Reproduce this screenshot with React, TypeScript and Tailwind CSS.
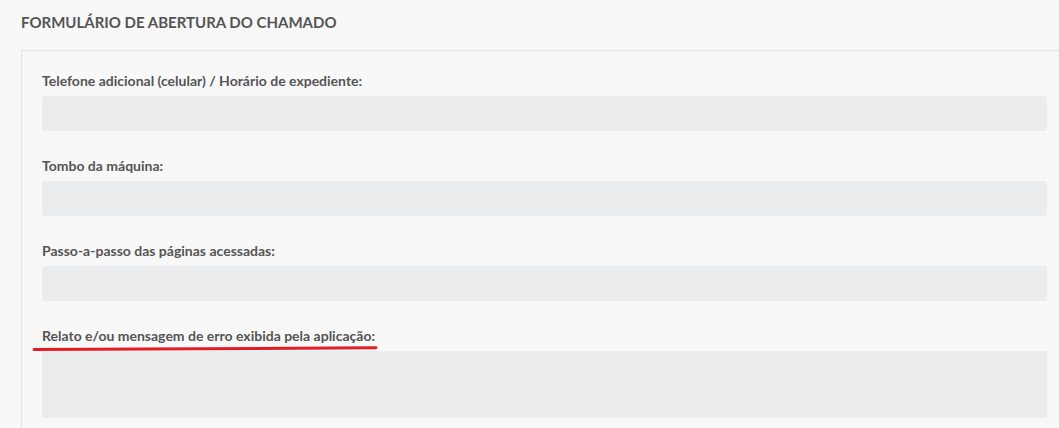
import React from "react";

const fields = [
  { label: "Telefone adicional (celular) / Horário de expediente:", h: "h-[35px]" },
  { label: "Tombo da máquina:", h: "h-[35px]" },
  { label: "Passo-a-passo das páginas acessadas:", h: "h-[35px]" },
];

export default function App() {
  return (
    <div
      className="w-full h-[428px] overflow-hidden bg-[#f8f8f8] pt-[12px] pl-[21px]"
      style={{ fontFamily: "Lato, 'Open Sans', sans-serif" }}
    >
      <h1 className="text-[15px] leading-[20px] font-bold text-[#555555] uppercase">
        Formulário de abertura do chamado
      </h1>
      <div className="mt-[18px] w-[1046px] border-t border-l border-[#e4e4e4] pl-[20px] pr-[20px] pt-[20px] pb-[30px] flex flex-col gap-[25px]">
        {fields.map((f) => (
          <div key={f.label} className="flex flex-col gap-[5px]">
            <label className="text-[14px] leading-[20px] font-bold text-[#555555]">{f.label}</label>
            <div className={`${f.h} w-full rounded-[2px] bg-[#ebecee]`} />
          </div>
        ))}
        <div className="relative flex flex-col gap-[5px]">
          <label className="text-[14px] leading-[20px] font-bold text-[#555555]">
            Relato e/ou mensagem de erro exibida pela aplicação:
          </label>
          <div className="h-[67px] w-full rounded-[2px] bg-[#ebecee]" />
          <svg
            className="absolute left-[-10px] top-[18px] overflow-visible"
            width="350"
            height="8"
            viewBox="0 0 350 8"
          >
            <path
              d="M2 5.5 C 60 5, 200 4.2, 344 3.8"
              stroke="#e31b23"
              strokeWidth="3"
              strokeLinecap="round"
              fill="none"
            />
          </svg>
        </div>
      </div>
    </div>
  );
}
